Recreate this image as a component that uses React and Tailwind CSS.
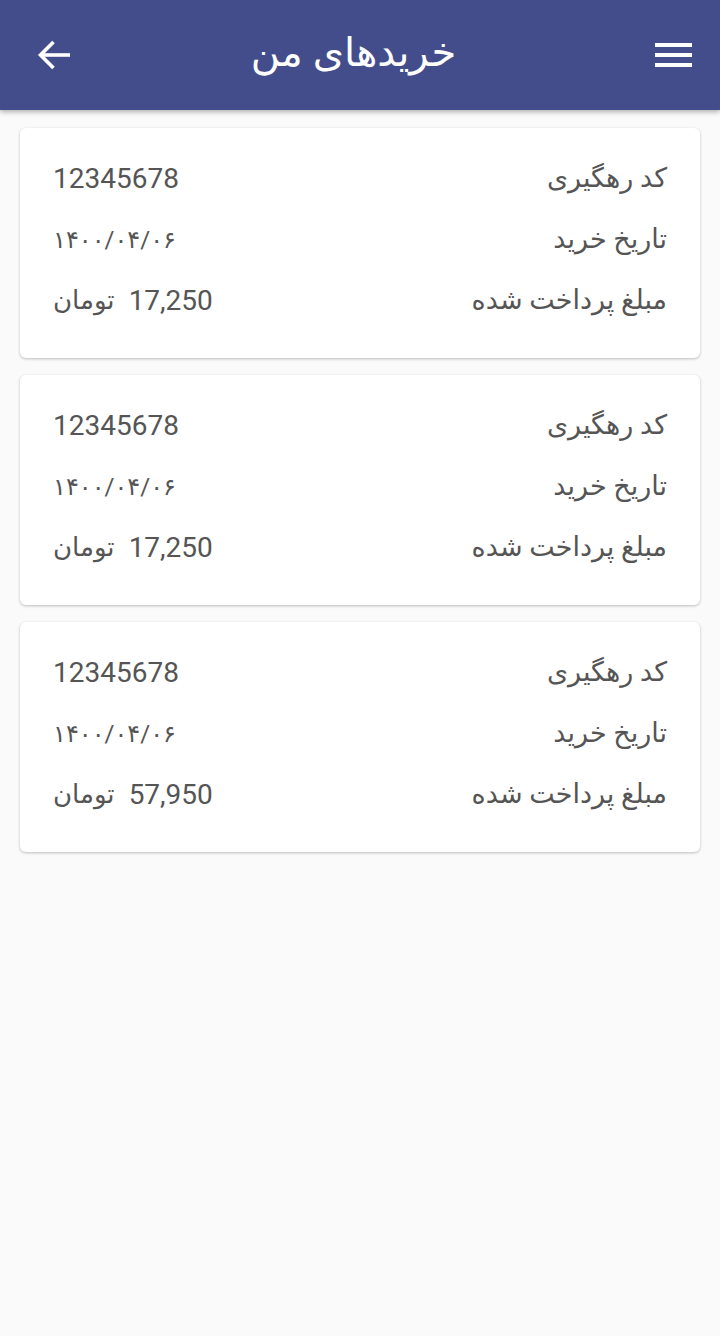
import React from "react";

const purchases = [
  { id: 1, code: "12345678", date: "۱۴۰۰/۰۴/۰۶", amount: "17,250" },
  { id: 2, code: "12345678", date: "۱۴۰۰/۰۴/۰۶", amount: "17,250" },
  { id: 3, code: "12345678", date: "۱۴۰۰/۰۴/۰۶", amount: "57,950" },
];

function Row({ label, children }) {
  return (
    <div className="flex items-center justify-between h-[61px]">
      <span className="text-[27px]">{label}</span>
      <span className="text-[28px] flex items-center gap-[14px]">{children}</span>
    </div>
  );
}

export default function App() {
  return (
    <div
      dir="rtl"
      className="min-h-[1336px] bg-[#fafafa] font-['Roboto','DejaVu_Sans',sans-serif]"
    >
      {/* Header */}
      <header className="relative z-10 h-[110px] bg-[#444d8c] flex items-center justify-between pr-[28px] pl-[36px] shadow-[0_2px_5px_rgba(0,0,0,0.3)]">
        <button className="w-[37px] h-[30px] flex flex-col justify-between py-[3px]" aria-label="menu">
          <span className="block h-[4px] w-full bg-white" />
          <span className="block h-[4px] w-full bg-white" />
          <span className="block h-[4px] w-full bg-white" />
        </button>
        <h1 className="text-white text-[40px] leading-none pb-[4px] pr-[20px]">خریدهای من</h1>
        <button className="w-[36px] h-[34px] flex items-center justify-center" aria-label="back">
          <svg width="36" height="34" viewBox="0 0 36 34" fill="none" stroke="white" strokeWidth="3.6">
            <path d="M34 17H5" />
            <path d="M17.5 4L4.5 17l13 13" />
          </svg>
        </button>
      </header>

      {/* Cards */}
      <main className="px-[20px] pt-[18px] flex flex-col gap-[17px]">
        {purchases.map((p) => (
          <article
            key={p.id}
            className="bg-white rounded-[6px] shadow-[0_1px_3px_rgba(0,0,0,0.25)] px-[33px] pt-[20px] pb-[27px] text-[#555]"
          >
            <Row label="کد رهگیری">{p.code}</Row>
            <Row label="تاریخ خرید">
              <span className="text-[24px]">{p.date}</span>
            </Row>
            <Row label="مبلغ پرداخت شده">
              <span>{p.amount}</span>
              <span className="text-[26px]">تومان</span>
            </Row>
          </article>
        ))}
      </main>
    </div>
  );
}
